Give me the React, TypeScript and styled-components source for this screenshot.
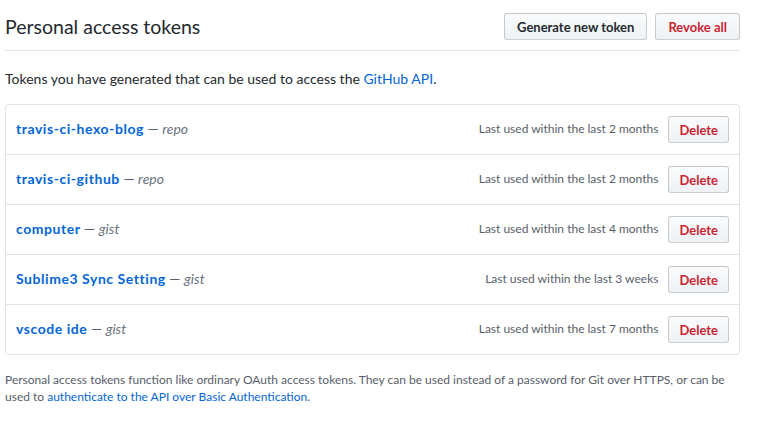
import React from "react";
import styled, { createGlobalStyle } from "styled-components";

const GlobalStyle = createGlobalStyle`
  html, body { margin: 0; padding: 0; background: #fff; }
  body {
    font-family: "Segoe UI", Lato, "Noto Sans", sans-serif;
    font-size: 14px;
    color: #24292e;
  }
`;

const Page = styled.div`
  width: 735px;
  padding-left: 5px;
`;

const Header = styled.div`
  display: flex;
  align-items: center;
  justify-content: space-between;
  padding: 13px 0 10px;
  border-bottom: 1px solid #e1e4e8;
`;

const Title = styled.h2`
  margin: 0;
  font-size: 19.5px;
  font-weight: 400;
  color: #24292e;
`;

const Actions = styled.div`
  display: flex;
  gap: 8px;
`;

const Button = styled.button<{ $danger?: boolean }>`
  font-family: inherit;
  font-size: 13px;
  font-weight: 700;
  height: 27px;
  padding: 0 12px;
  border-radius: 3px;
  border: 1px solid rgba(27, 31, 35, 0.2);
  background: linear-gradient(-180deg, #fafbfc 0%, #eff3f6 90%);
  color: ${(p) => (p.$danger ? "#cb2431" : "#24292e")};
  cursor: pointer;
`;

const Intro = styled.p`
  margin: 18px 0 15px;
  line-height: 20px;
`;

const Link = styled.a`
  color: #0366d6;
  text-decoration: none;
`;

const List = styled.div`
  border: 1px solid #e1e4e8;
  border-radius: 3px;
`;

const Row = styled.div`
  display: flex;
  align-items: center;
  height: 49px;
  padding: 0 10px;
  & + & {
    border-top: 1px solid #e1e4e8;
  }
`;

const Name = styled.span`
  flex: 1;
  color: #586069;
  margin-top: -2px;
`;

const TokenLink = styled(Link)`
  font-weight: 700;
  letter-spacing: 0.55px;
`;

const Scope = styled.em`
  color: #6a737d;
`;

const LastUsed = styled.span`
  font-size: 12px;
  color: #586069;
  margin-right: 10px;
  margin-top: -3px;
`;

const DeleteButton = styled(Button)`
  padding: 0 10px;
`;

const Note = styled.p`
  margin: 16px 0 0;
  font-size: 12px;
  line-height: 17px;
  color: #586069;
`;

const tokens = [
  { name: "travis-ci-hexo-blog", scope: "repo", last: "Last used within the last 2 months" },
  { name: "travis-ci-github", scope: "repo", last: "Last used within the last 2 months" },
  { name: "computer", scope: "gist", last: "Last used within the last 4 months" },
  { name: "Sublime3 Sync Setting", scope: "gist", last: "Last used within the last 3 weeks" },
  { name: "vscode ide", scope: "gist", last: "Last used within the last 7 months" },
];

export default function App() {
  return (
    <>
      <GlobalStyle />
      <Page>
        <Header>
          <Title>Personal access tokens</Title>
          <Actions>
            <Button>Generate new token</Button>
            <Button $danger>Revoke all</Button>
          </Actions>
        </Header>
        <Intro>
          Tokens you have generated that can be used to access the <Link href="#">GitHub API</Link>.
        </Intro>
        <List>
          {tokens.map((t) => (
            <Row key={t.name}>
              <Name>
                <TokenLink href="#">{t.name}</TokenLink> — <Scope>{t.scope}</Scope>
              </Name>
              <LastUsed>{t.last}</LastUsed>
              <DeleteButton $danger>Delete</DeleteButton>
            </Row>
          ))}
        </List>
        <Note>
          Personal access tokens function like ordinary OAuth access tokens. They can be used instead of a password for Git over HTTPS, or can be used to{" "}
          <Link href="#">authenticate to the API over Basic Authentication</Link>.
        </Note>
      </Page>
    </>
  );
}
